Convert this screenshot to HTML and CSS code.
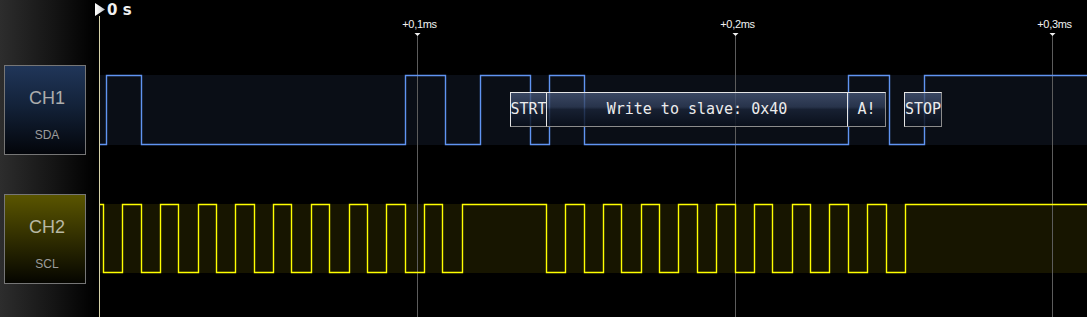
FILE: index.html
```html
<!DOCTYPE html>
<html>
<head>
<meta charset="utf-8">
<link rel="stylesheet" href="styles.css">
</head>
<body>
<div class="scope">
  <aside class="channels">
    <div class="ch ch1"><span class="ch-name">CH1</span><span class="ch-sig">SDA</span></div>
    <div class="ch ch2"><span class="ch-name">CH2</span><span class="ch-sig">SCL</span></div>
  </aside>
  <main class="plot">
    <svg class="wave" width="988" height="317" viewBox="99 0 988 317">
      <defs>
        <linearGradient id="flag" x1="0" y1="0" x2="1" y2="0">
          <stop offset="0" stop-color="#ffffff"/>
          <stop offset="0.6" stop-color="#e0e0e0"/>
          <stop offset="1" stop-color="#b0b0b0"/>
        </linearGradient>
      </defs>
      <rect class="band-sda" x="100" y="75" width="987" height="70"/>
      <rect class="band-scl" x="100" y="204" width="987" height="69"/>
      <g class="grid">
        <line x1="417.5" y1="35" x2="417.5" y2="317"/>
        <line x1="735.5" y1="35" x2="735.5" y2="317"/>
        <line x1="1052.5" y1="35" x2="1052.5" y2="317"/>
      </g>
      <g class="ticks">
        <polygon points="414.5,33 420.5,33 417.5,36"/>
        <polygon points="732.5,33 738.5,33 735.5,36"/>
        <polygon points="1049.5,33 1055.5,33 1052.5,36"/>
      </g>
      <g class="tlabel">
        <text x="419.5" y="28">+0,1ms</text>
        <text x="737.5" y="28">+0,2ms</text>
        <text x="1054.5" y="28">+0,3ms</text>
      </g>
      <path class="sda" d="M100,144.5 H106.5 V75.5 H141.5 V144.5 H405.5 V75.5 H445.5 V144.5 H480.5 V75.5 H530.5 V144.5 H549.5 V75.5 H584.5 V144.5 H848.5 V75.5 H889.5 V144.5 H924.5 V75.5 H1087"/>
      <path class="scl" d="M100,204.5 H103.5 V272.5 H122.5 V204.5 H141.5 V272.5 H160.5 V204.5 H178.5 V272.5 H198.5 V204.5 H216.5 V272.5 H235.5 V204.5 H254.5 V272.5 H273.5 V204.5 H291.5 V272.5 H311.5 V204.5 H329.5 V272.5 H349.5 V204.5 H367.5 V272.5 H386.5 V204.5 H405.5 V272.5 H424.5 V204.5 H442.5 V272.5 H462.5 V204.5 H546.5 V272.5 H565.5 V204.5 H584.5 V272.5 H603.5 V204.5 H621.5 V272.5 H641.5 V204.5 H659.5 V272.5 H678.5 V204.5 H697.5 V272.5 H716.5 V204.5 H735.5 V272.5 H754.5 V204.5 H772.5 V272.5 H792.5 V204.5 H810.5 V272.5 H829.5 V204.5 H848.5 V272.5 H867.5 V204.5 H886.5 V272.5 H905.5 V204.5 H1087"/>
      <line class="cursor" x1="99.5" y1="16" x2="99.5" y2="317"/>
      <polygon points="95,3 105,9.5 95,16" fill="url(#flag)"/>
      <text class="zero" x="107" y="15">0 s</text>
    </svg>
    <div class="decode-row">
      <div class="dec dec-strt">STRT</div>
      <div class="dec dec-data">Write to slave: 0x40</div>
      <div class="dec dec-ack end">A!</div>
      <div class="dec dec-stop end">STOP</div>
    </div>
  </main>
</div>
</body>
</html>
```

FILE: styles.css
```css
html, body {
  margin: 0;
  padding: 0;
  background: #000;
}

body {
  width: 1087px;
  height: 317px;
  overflow: hidden;
}

.scope {
  display: flex;
  height: 317px;
}

.channels {
  width: 99px;
  flex: none;
  box-sizing: border-box;
  padding: 65px 0 0 4px;
  display: flex;
  flex-direction: column;
  gap: 39px;
  background: linear-gradient(90deg, #2d2d2d 0%, #141414 55%, #000 96%);
}

.ch {
  width: 82px;
  height: 90px;
  box-sizing: border-box;
  border: 1px solid #767676;
  display: flex;
  flex-direction: column;
  align-items: center;
  padding: 23px 0 0 4px;
  font-family: "Liberation Sans", Arial, sans-serif;
}

.ch1 {
  background: linear-gradient(180deg, #203659 0%, #132239 45%, #03050a 100%);
}

.ch2 {
  background: linear-gradient(180deg, #5a5500 0%, #343100 45%, #050500 100%);
}

.ch-name {
  font-size: 18px;
  line-height: 18px;
  color: #adadad;
}

.ch2 .ch-name {
  color: #b8b8a4;
}

.ch-sig {
  font-size: 12px;
  line-height: 12px;
  margin-top: 22px;
  color: #9c9c9c;
}

.plot {
  flex: 1;
  position: relative;
}

.wave {
  display: block;
  overflow: visible;
}

.band-sda {
  fill: #0a0e16;
}

.band-scl {
  fill: #171500;
}

.grid line {
  stroke: #5c5c5c;
  stroke-width: 1;
}

.ticks polygon {
  fill: #f0f0f0;
}

.tlabel text {
  font-family: "Liberation Sans", Arial, sans-serif;
  font-size: 11px;
  letter-spacing: -0.3px;
  fill: #f2f2f2;
  text-anchor: middle;
}

.sda {
  fill: none;
  stroke: #6094f2;
  stroke-width: 1.4;
}

.scl {
  fill: none;
  stroke: #ffff00;
  stroke-width: 1.4;
}

.cursor {
  stroke: #d6d2aa;
  stroke-width: 1;
}

.zero {
  font-family: "DejaVu Sans", sans-serif;
  font-size: 15px;
  font-weight: bold;
  fill: #f0f0f0;
}

.decode-row {
  position: absolute;
  left: 411px;
  top: 92px;
  display: flex;
}

.dec {
  height: 35px;
  box-sizing: border-box;
  border-top: 1px solid #e6e6e6;
  border-left: 1px solid #e6e6e6;
  border-bottom: 1px solid #8c8c8c;
  background: linear-gradient(180deg,
    rgba(72, 88, 120, 0.78) 0%,
    rgba(48, 62, 90, 0.78) 42%,
    rgba(26, 36, 56, 0.82) 50%,
    rgba(10, 16, 28, 0.85) 100%);
  font-family: "DejaVu Sans Mono", monospace;
  font-size: 15px;
  line-height: 33px;
  color: #ececec;
  text-align: center;
  white-space: nowrap;
  overflow: visible;
  display: flex;
  justify-content: center;
}

.dec.end {
  border-right: 1px solid #8c8c8c;
}

.dec-strt {
  width: 36px;
}

.dec-data {
  width: 301px;
}

.dec-ack {
  width: 39px;
}

.dec-stop {
  width: 38px;
  margin-left: 18px;
}
```
